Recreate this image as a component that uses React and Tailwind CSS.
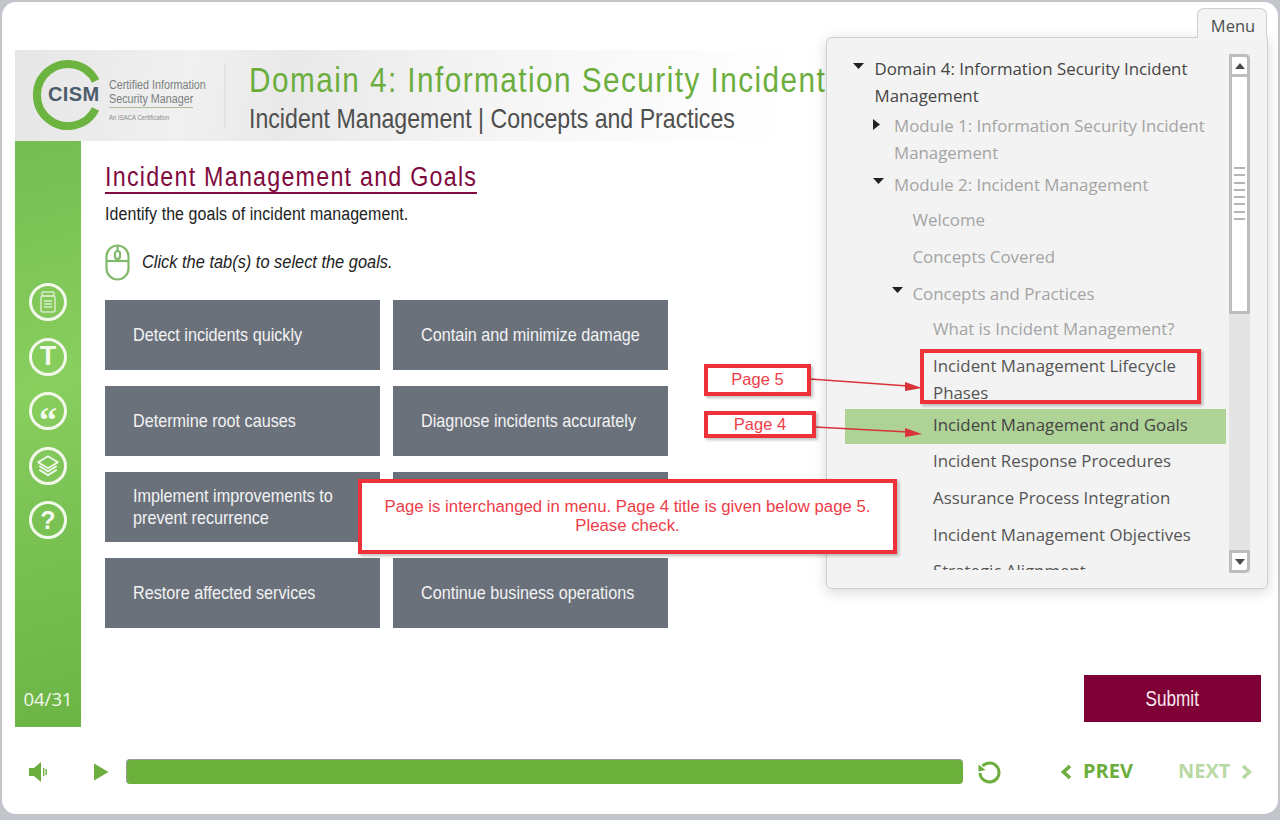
import React from "react";

const narrow = "font-['Liberation_Sans',sans-serif]";
const open = "font-['Open_Sans',sans-serif]";

function Circle({ children }) {
  return (
    <div className="w-[38px] h-[38px] rounded-full border-[3px] border-[#f3f8ec] flex items-center justify-center text-[#f5faf0]">
      {children}
    </div>
  );
}

function Tile({ children }) {
  return (
    <div className={`h-[70px] w-[275px] bg-[#6b717b] pl-[28px] pb-[1px] flex items-center text-[18.5px] leading-[22px] text-[#f2f3f4] ${narrow}`}>
      <span className="block origin-left scale-x-[0.875] whitespace-nowrap">{children}</span>
    </div>
  );
}

function Tri({ dir, left, top }) {
  return (
    <svg className="absolute" style={{ left, top }} width="12" height="12" viewBox="0 0 12 12">
      {dir === "down" ? <path d="M0 2 L11 2 L5.5 8 Z" fill="#222" /> : <path d="M1 0 L8 5.5 L1 11 Z" fill="#222" />}
    </svg>
  );
}

function RedBox({ className, children }) {
  return (
    <div className={`absolute border-[4px] border-[#ee3239] shadow-[2px_2px_3px_rgba(0,0,0,0.25)] ${className}`}>
      {children}
    </div>
  );
}

function ScrollBtn({ down }) {
  return (
    <div className={`h-[23px] w-[21px] bg-white border-[3px] border-[#bdbdbd] flex items-center justify-center ${down ? "rounded-br-[5px]" : "rounded-tr-[5px]"}`}>
      <svg width="12" height="8" viewBox="0 0 12 8">
        {down ? <path d="M1 1 L11 1 L6 7 Z" fill="#4a4a4a" /> : <path d="M1 7 L11 7 L6 1 Z" fill="#4a4a4a" />}
      </svg>
    </div>
  );
}

export default function App() {
  return (
    <div className={`relative w-[1280px] h-[820px] overflow-hidden bg-[#c2c6cb] ${open}`}>
      <div className="ml-[2px] mt-[2px] h-[812px] w-[1276px] rounded-[14px] bg-white flex flex-col">
        {/* Header */}
        <div className="mt-[48px] ml-[13px] mr-[10px] h-[91px] flex items-stretch overflow-hidden bg-[linear-gradient(100deg,#e6e6e6_0%,#f0f0f0_14%,#e9e9e9_22%,#f6f6f6_40%,#ffffff_62%)]">
          <div className="relative w-[211px] shrink-0 border-r-[2px] border-r-[#e2e2e2] my-[13px]">
            <svg className="absolute left-[17px] top-[-4px]" width="72" height="72" viewBox="0 0 72 72">
              <path d="M63.6 22 A31 31 0 1 0 63.6 50" fill="none" stroke="#6cb33f" strokeWidth="8" />
            </svg>
            <div className="absolute left-[33px] top-[21px] text-[20px] tracking-[0.4px] font-bold leading-[20px] text-[#4d5c6b] font-['Liberation_Sans',sans-serif]">CISM</div>
            <div className={`absolute left-[94px] top-[15px] origin-left scale-x-[0.86] text-[12.5px] leading-[14px] text-[#7a7f80] whitespace-nowrap ${narrow}`}>
              Certified Information<br />Security Manager
            </div>
            <div className="absolute left-[94px] top-[44px] w-[84px] h-[1px] bg-[#a9bd98]"></div>
            <div className={`absolute left-[94px] top-[50px] origin-left scale-x-[0.86] text-[7px] leading-[9px] text-[#8b8b8b] whitespace-nowrap ${narrow}`}>An ISACA Certification</div>
          </div>
          <div className="pl-[23px] min-w-0">
            <div className={`mt-[10px] origin-left scale-x-[0.85] text-[35px] leading-[40px] tracking-[1.7px] text-[#6cae3e] whitespace-nowrap ${narrow}`}>
              Domain 4: Information Security Incident
            </div>
            <div className={`mt-[1px] origin-left scale-x-[0.812] text-[28.5px] leading-[34px] text-[#4f4f4f] whitespace-nowrap ${narrow}`}>
              Incident Management | Concepts and Practices
            </div>
          </div>
        </div>

        {/* Body */}
        <div className="ml-[13px] h-[586px] flex">
          <div className="w-[66px] shrink-0 flex flex-col items-center bg-[linear-gradient(165deg,#76bd52_0%,#88cf5e_42%,#7cc356_62%,#6cb445_100%)]">
            <div className="mt-[142px] flex flex-col gap-[16.5px]">
              <Circle>
                <svg width="18" height="22" viewBox="0 0 18 22" fill="none" stroke="#d9ecc8" strokeWidth="1.5">
                  <rect x="3" y="1" width="12" height="4" rx="1" />
                  <rect x="2" y="5" width="14" height="16" rx="2" />
                  <path d="M5 10 H13 M5 13 H13 M5 16 H13" />
                </svg>
              </Circle>
              <Circle>
                <span className="text-[27px] font-bold leading-none font-['Liberation_Sans',sans-serif]">T</span>
              </Circle>
              <Circle>
                <span className="mt-[17px] text-[36px] font-bold leading-none font-['Liberation_Serif',serif]">“</span>
              </Circle>
              <Circle>
                <svg width="24" height="24" viewBox="0 0 22 22" fill="none" stroke="#f5faf0" strokeWidth="1.6" strokeLinejoin="round">
                  <path d="M11 2 L20 7.5 L11 13 L2 7.5 Z" />
                  <path d="M3 11 L11 16 L19 11" />
                  <path d="M3 14.5 L11 19.5 L19 14.5" />
                </svg>
              </Circle>
              <Circle>
                <span className="text-[25px] font-bold leading-none font-['Liberation_Sans',sans-serif]">?</span>
              </Circle>
            </div>
            <div className="mt-auto mb-[16px] text-[18.5px] leading-[24px] text-[#f3f8ec]">04/31</div>
          </div>

          <div className="flex-1 pl-[24px] pr-[17px] flex flex-col">
            <h1 className={`mt-[21px] w-fit origin-left scale-x-[0.861] whitespace-nowrap text-[27px] leading-[30px] tracking-[1.45px] text-[#7f0a3e] border-b-[2px] border-[#7f0a3e] ${narrow}`}>
              Incident Management and Goals
            </h1>
            <p className={`mt-[9px] origin-left scale-x-[0.886] whitespace-nowrap text-[18px] leading-[22px] tracking-[0.1px] text-[#222] ${narrow}`}>
              Identify the goals of incident management.
            </p>
            <div className="mt-[18px] h-[38px] flex items-center gap-[12px]">
              <svg width="25" height="37" viewBox="0 0 25 37" fill="none" stroke="#82b96a" strokeWidth="2.2">
                <rect x="1.5" y="1.5" width="22" height="34" rx="11" />
                <path d="M1.5 17 H23.5" />
                <path d="M12.5 2 V17" />
                <rect x="10" y="7" width="5" height="8" rx="2.5" fill="#fff" />
              </svg>
              <span className={`origin-left scale-x-[0.886] whitespace-nowrap text-[18.5px] italic leading-[22px] text-[#222] ${narrow}`}>Click the tab(s) to select the goals.</span>
            </div>
            <div className="mt-[19px] grid grid-cols-[275px_275px] gap-x-[13px] gap-y-[16px] w-fit">
              <Tile>Detect incidents quickly</Tile>
              <Tile>Contain and minimize damage</Tile>
              <Tile>Determine root causes</Tile>
              <Tile>Diagnose incidents accurately</Tile>
              <Tile>Implement improvements to<br />prevent recurrence</Tile>
              <Tile></Tile>
              <Tile>Restore affected services</Tile>
              <Tile>Continue business operations</Tile>
            </div>
            <div className="mt-auto mb-[5px] self-end w-[177px] h-[47px] bg-[#7f0036] flex items-center justify-center">
              <span className={`scale-x-[0.78] text-[22px] text-[#f7e9ee] ${narrow}`}>Submit</span>
            </div>
          </div>
        </div>

        {/* Footer */}
        <div className="mt-[32px] h-[25px] flex items-center text-[#6cae3e]">
          <svg className="ml-[26px] shrink-0" width="20" height="22" viewBox="0 0 20 22" fill="#6cae3e">
            <path d="M1 7 H6 L13 1 V21 L6 15 H1 Z" />
            <rect x="15" y="7" width="1.4" height="8" />
            <rect x="17.5" y="8" width="1.4" height="6" />
          </svg>
          <svg className="ml-[45px] shrink-0" width="16" height="18" viewBox="0 0 16 18" fill="#6cae3e">
            <path d="M1 0.5 L15.5 9 L1 17.5 Z" />
          </svg>
          <div className="ml-[17px] w-[837px] h-[25px] rounded-[4px] bg-[#6bb13c] border-t-[1px] border-l-[1px] border-[#9a9a9a]"></div>
          <svg className="ml-[13px] shrink-0" width="26" height="26" viewBox="0 0 26 26" fill="none" stroke="#6cae3e" strokeWidth="3">
            <path d="M6.5 7 A9.5 9.5 0 1 1 4 14" />
            <path d="M2.5 5.5 L2.5 12.5 L9.5 11 Z" fill="#6cae3e" stroke="none" />
          </svg>
          <svg className="ml-[58px] shrink-0" width="12" height="16" viewBox="0 0 12 16" fill="none" stroke="#6cae3e" strokeWidth="3.6">
            <path d="M10 2 L3.5 8 L10 14" />
          </svg>
          <span className="ml-[11px] mb-[2px] text-[20px] font-bold leading-[25px] text-[#6cae3e]">PREV</span>
          <span className="ml-[45px] mb-[2px] text-[20px] font-bold leading-[25px] text-[#b9d9a4]">NEXT</span>
          <svg className="ml-[11px] shrink-0" width="12" height="16" viewBox="0 0 12 16" fill="none" stroke="#b9d9a4" strokeWidth="3.6">
            <path d="M2 2 L8.5 8 L2 14" />
          </svg>
        </div>
      </div>

      {/* Menu popup */}
      <div className="absolute left-[1197px] top-[8px] w-[70px] h-[30px] z-20 rounded-t-[7px] border border-b-0 border-[#cfcfcf] bg-[#f4f4f4] pt-[6px] pl-[2px] flex items-center justify-center text-[16.5px] text-[#4f4f4f]">
        Menu
      </div>
      <div className="absolute left-[826px] top-[37px] w-[442px] h-[552px] z-10 rounded-[6px] rounded-tr-none border border-[#cfcfcf] bg-[#f3f3f3] shadow-[0_3px_14px_rgba(0,0,0,0.16)] flex pl-[18px] pt-[17px]">
        <div className="w-[381px] h-[515px] overflow-hidden text-[16.85px] leading-[27px] text-[#a4a4a4]">
          <div className="relative pl-[29.5px] pr-[30px] text-[#454545]">
            <Tri dir="down" left={8} top={6} />
            Domain 4: Information Security Incident Management
          </div>
          <div className="relative mt-[3px] pl-[49px] pr-[10px]">
            <Tri dir="right" left={27} top={7} />
            Module 1: Information Security Incident Management
          </div>
          <div className="relative mt-[5px] pl-[49px]">
            <Tri dir="down" left={28} top={5} />
            Module 2: Incident Management
          </div>
          <div className="mt-[8px] pl-[67.5px]">Welcome</div>
          <div className="mt-[10px] pl-[67.5px]">Concepts Covered</div>
          <div className="relative mt-[10px] pl-[67.5px]">
            <Tri dir="down" left={47} top={5} />
            Concepts and Practices
          </div>
          <div className="mt-[8px] pl-[88px]">What is Incident Management?</div>
          <div className="mt-[10px] pl-[88px] pr-[20px] text-[#555]">Incident Management Lifecycle Phases</div>
          <div className="mt-[3px] pl-[88px] pt-[2px] pb-[6px] bg-[#afd396] text-[#444]">Incident Management and Goals</div>
          <div className="mt-[3px] pl-[88px] text-[#555]">Incident Response Procedures</div>
          <div className="mt-[10px] pl-[88px] text-[#555]">Assurance Process Integration</div>
          <div className="mt-[10px] pl-[88px] text-[#555]">Incident Management Objectives</div>
          <div className="mt-[9px] pl-[88px] text-[#555]">Strategic Alignment</div>
        </div>
        <div className="ml-[3px] -mt-[1px] w-[21px] h-[519px] bg-[#e4e4e4] flex flex-col">
          <ScrollBtn />
          <div className="h-[237px] w-[21px] bg-white border-x-[3px] border-b-[3px] border-[#bdbdbd] flex flex-col justify-end items-center pb-[91px] gap-[5.3px]">
            {[0, 1, 2, 3, 4, 5, 6, 7].map((i) => (
              <div key={i} className="w-[11px] h-[2px] bg-[#b5b5b5]"></div>
            ))}
          </div>
          <div className="mt-auto">
            <ScrollBtn down />
          </div>
        </div>
      </div>

      {/* Review annotations */}
      <svg className="absolute left-0 top-0 z-30 pointer-events-none" width="1280" height="820" viewBox="0 0 1280 820">
        <path d="M810 379 L908 386" stroke="#d8323a" strokeWidth="1.6" fill="none" />
        <path d="M905 382 L922 388 L905 391 Z" fill="#d8323a" />
        <path d="M815 427 L908 432" stroke="#d8323a" strokeWidth="1.6" fill="none" />
        <path d="M905 428 L922 434 L905 437 Z" fill="#d8323a" />
      </svg>
      <RedBox className="left-[704px] top-[364px] w-[107px] h-[32px] pb-[2px] bg-white z-30 flex items-center justify-center text-[16.5px] text-[#ee3d48] font-['Liberation_Sans',sans-serif]">
        Page 5
      </RedBox>
      <RedBox className="left-[704px] top-[411px] w-[112px] h-[27px] bg-white z-30 flex items-center justify-center text-[16.5px] text-[#ee3d48] font-['Liberation_Sans',sans-serif]">
        Page 4
      </RedBox>
      <RedBox className="left-[920px] top-[349px] w-[281px] h-[55px] z-30" />
      <RedBox className="left-[358px] top-[479px] w-[539px] h-[75px] pb-[2px] bg-white z-30 flex items-center justify-center text-center text-[16.8px] leading-[19px] text-[#ee3d48] font-['Liberation_Sans',sans-serif]">
        <span>
          Page is interchanged in menu. Page 4 title is given below page 5.
          <br />
          Please check.
        </span>
      </RedBox>
    </div>
  );
}
